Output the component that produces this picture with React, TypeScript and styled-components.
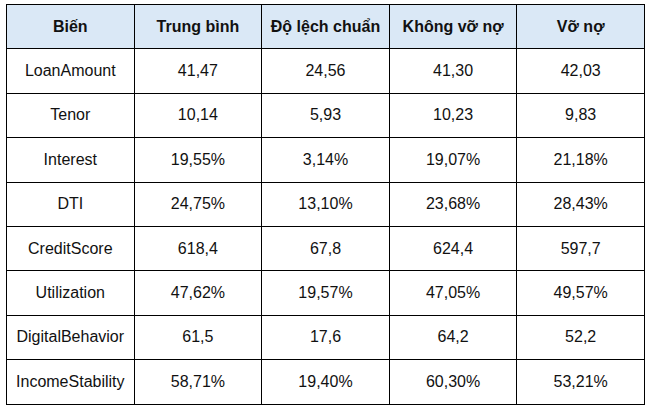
import React from "react";
import styled, { createGlobalStyle } from "styled-components";

const GlobalStyle = createGlobalStyle`
  body {
    margin: 0;
    background: #ffffff;
    font-family: "Liberation Sans", Arial, sans-serif;
  }
`;

const Page = styled.div`
  padding: 4px 0 0 6px;
`;

const Table = styled.table`
  border-collapse: collapse;
  table-layout: fixed;
  width: 639px;
  color: #111111;
  font-size: 16px;
`;

const HeadCell = styled.th`
  background: #dae8f6;
  border: 1px solid #000000;
  font-weight: bold;
  text-align: center;
  padding: 0;
`;

const Cell = styled.td`
  border: 1px solid #000000;
  text-align: center;
  padding: 0;
`;

const Row = styled.tr`
  height: 44.4px;
`;

const headers = ["Biến", "Trung bình", "Độ lệch chuẩn", "Không vỡ nợ", "Vỡ nợ"];

const rows: string[][] = [
  ["LoanAmount", "41,47", "24,56", "41,30", "42,03"],
  ["Tenor", "10,14", "5,93", "10,23", "9,83"],
  ["Interest", "19,55%", "3,14%", "19,07%", "21,18%"],
  ["DTI", "24,75%", "13,10%", "23,68%", "28,43%"],
  ["CreditScore", "618,4", "67,8", "624,4", "597,7"],
  ["Utilization", "47,62%", "19,57%", "47,05%", "49,57%"],
  ["DigitalBehavior", "61,5", "17,6", "64,2", "52,2"],
  ["IncomeStability", "58,71%", "19,40%", "60,30%", "53,21%"],
];

export default function App() {
  return (
    <Page>
      <GlobalStyle />
      <Table>
        <thead>
          <Row>
            {headers.map((h) => (
              <HeadCell key={h}>{h}</HeadCell>
            ))}
          </Row>
        </thead>
        <tbody>
          {rows.map((r) => (
            <Row key={r[0]}>
              {r.map((c, i) => (
                <Cell key={i}>{c}</Cell>
              ))}
            </Row>
          ))}
        </tbody>
      </Table>
    </Page>
  );
}
